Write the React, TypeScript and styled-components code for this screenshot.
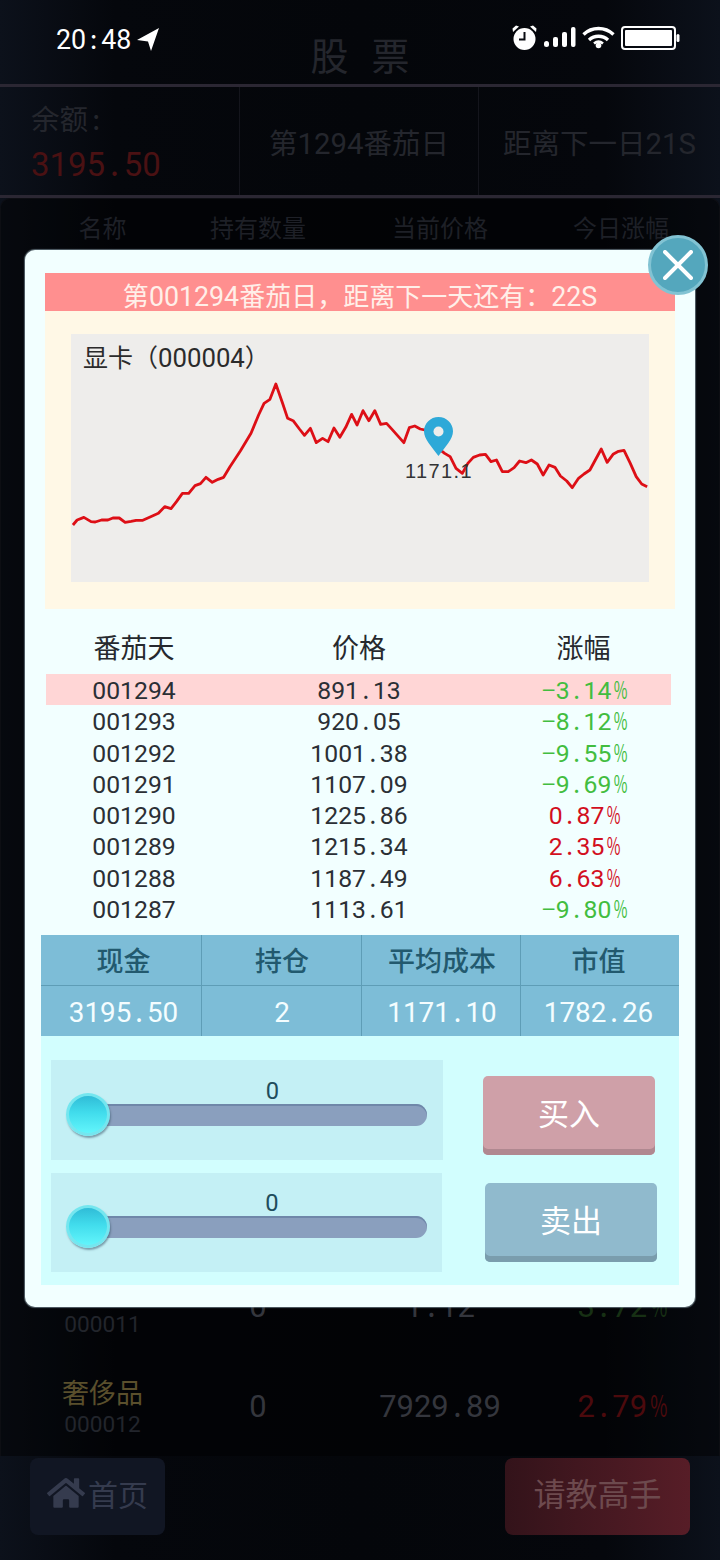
import React from "react";
import styled, { createGlobalStyle } from "styled-components";
import { FaHome } from "react-icons/fa";

const Global = createGlobalStyle`
  html, body { margin: 0; padding: 0; background: #05070c; }
  * { box-sizing: border-box; }
  #root { width: 720px; height: 1560px; overflow: hidden; }
`;

const Page = styled.div`
  position: relative;
  width: 720px;
  height: 1560px;
  display: flex;
  flex-direction: column;
  overflow: hidden;
  font-family: "Noto Sans CJK SC", "Noto Sans", sans-serif;
  background: linear-gradient(90deg, #0c111b 0%, #05070c 16%, #04060a 50%, #05070c 84%, #0c111b 100%);
`;

/* ---------- digits, dots and signs keep the same pitch, as in the reference ---------- */
const Slot = styled.span<{ $squeeze?: boolean }>`
  display: inline-block;
  width: 0.58em;
  text-align: center;
  transform: ${(p) => (p.$squeeze ? "scaleX(0.62)" : "none")};
  transform-origin: center;
`;
const Digits = styled.span`
  font-family: Roboto, "Noto Sans CJK SC", sans-serif;
  font-size: 1.03em;
  font-weight: 400;
`;
const Mono = ({ text }: { text: string }) => (
  <span>
    {text.split(/([.:%-])/).map((part, i) =>
      /^[.:%-]$/.test(part) ? (
        <Slot key={i} $squeeze={part === "%"}>
          {part === "-" ? "−" : part}
        </Slot>
      ) : part ? (
        <Digits key={i}>{part}</Digits>
      ) : null
    )}
  </span>
);

/* ---------- status bar ---------- */
const StatusBar = styled.div`
  position: absolute;
  left: 0;
  top: 0;
  width: 100%;
  height: 50px;
  display: flex;
  justify-content: space-between;
  align-items: flex-start;
  padding: 22px 40px 0 56px;
  color: #fff;
`;
const Clock = styled.div`
  display: flex;
  align-items: center;
  gap: 5px;
  font-size: 26px;
  line-height: 32px;
`;
const StatusIcons = styled.div`
  display: flex;
  align-items: center;
  gap: 6px;
  padding-top: 2px;
`;

/* ---------- dimmed page ---------- */
const Header = styled.header`
  height: 87px;
  padding-top: 26px;
  display: flex;
  align-items: flex-start;
  justify-content: center;
  border-bottom: 3px solid #2b2733;
`;
const Title = styled.h1`
  margin: 0;
  font-size: 38px;
  line-height: 56px;
  font-weight: 400;
  letter-spacing: 23px;
  padding-left: 23px;
  color: #24262d;
`;
const InfoBar = styled.section`
  height: 111px;
  display: grid;
  grid-template-columns: 240px 239px 1fr;
  border-bottom: 3px solid #2b2733;
`;
const InfoCell = styled.div<{ $divider?: boolean }>`
  display: flex;
  flex-direction: column;
  justify-content: center;
  align-items: center;
  font-size: 28.5px;
  color: #24262d;
  white-space: nowrap;
  border-right: ${(p) => (p.$divider ? "1px solid #14151c" : "none")};
`;
const Balance = styled(InfoCell)`
  align-items: flex-start;
  padding-left: 31px;
  line-height: 44px;
`;
const BalanceValue = styled.div`
  font-size: 32px;
  color: #4a1113;
`;
const Panel = styled.section`
  flex: 1;
  display: flex;
  flex-direction: column;
  background: rgba(0, 0, 0, 0.45);
  border-radius: 10px 10px 0 0;
  border: 1px solid #0d0e13;
  border-bottom: none;
`;
const ColumnGrid = styled.div`
  display: grid;
  grid-template-columns: 143px 168px 196px 166px;
  padding-left: 30px;
  align-items: center;
  text-align: center;
`;
const ColumnHead = styled(ColumnGrid)`
  height: 54px;
  font-size: 24px;
  color: #1e2027;
`;
const StockList = styled.div`
  flex: 1;
  display: flex;
  flex-direction: column;
  justify-content: flex-end;
`;
const StockRow = styled(ColumnGrid)`
  height: 100px;
  font-size: 30px;
  color: #34363d;
  white-space: nowrap;
`;
const StockName = styled.div`
  margin-top: 2px;
  font-size: 27px;
  line-height: 32px;
  color: #5a4f2c;
  min-height: 32px;
`;
const StockCode = styled.div`
  font-size: 22px;
  line-height: 28px;
  color: #22252c;
`;
const StockNumber = styled.div`
  padding-bottom: 4px;
`;
const Change = styled(StockNumber)<{ $up?: boolean }>`
  color: ${(p) => (p.$up ? "#4c0a0d" : "#173014")};
`;
const Footer = styled.footer`
  height: 104px;
  padding: 2px 30px 0;
  display: flex;
  justify-content: space-between;
  align-items: flex-start;
`;
const HomeButton = styled.div`
  width: 135px;
  height: 77px;
  display: flex;
  align-items: center;
  justify-content: center;
  gap: 3px;
  padding-bottom: 8px;
  background: #111623;
  border-radius: 8px;
  color: #353b4e;
  font-size: 30px;
`;
const AskButton = styled.div`
  width: 185px;
  height: 77px;
  display: flex;
  align-items: center;
  justify-content: center;
  padding-bottom: 9px;
  background: linear-gradient(90deg, #33131a, #571d27);
  border-radius: 8px;
  color: #6d4a4e;
  font-size: 32px;
`;

/* ---------- modal ---------- */
const Modal = styled.div`
  position: absolute;
  left: 25px;
  top: 250px;
  width: 670px;
  height: 1057px;
  padding: 23px 16px 22px;
  display: flex;
  flex-direction: column;
  background: #f2ffff;
  border-radius: 10px;
  box-shadow: 0 0 1px 1px rgba(140, 160, 170, 0.6);
`;
const CloseButton = styled.div`
  position: absolute;
  left: 623px;
  top: -15px;
  width: 60px;
  height: 60px;
  border-radius: 50%;
  background: #54a7bd;
  border: 3px solid #82c3d3;
  display: flex;
  align-items: center;
  justify-content: center;
`;
const Banner = styled.div`
  height: 38px;
  margin: 0 4px;
  padding-top: 3px;
  background: #ff8f8f;
  color: #ffefe9;
  font-size: 26px;
  line-height: 38px;
  text-align: center;
  white-space: nowrap;
`;
const ChartFrame = styled.div`
  height: 298px;
  margin: 0 4px;
  padding: 23px 26px 27px;
  background: #fff8e6;
`;
const Chart = styled.div`
  position: relative;
  height: 248px;
  background: #eeedeb;
`;
const ChartTitle = styled.div`
  position: absolute;
  left: 12px;
  top: 4px;
  font-size: 25px;
  line-height: 37px;
  color: #2b2b2b;
  white-space: nowrap;
`;
const ChartLine = styled.svg`
  display: block;
  width: 100%;
  height: 100%;
`;
const Pin = styled.svg`
  position: absolute;
  left: 353px;
  top: 83px;
`;
const PinLabel = styled.div`
  position: absolute;
  left: 334px;
  top: 124px;
  font-family: "Liberation Sans", Arial, sans-serif;
  font-size: 20px;
  line-height: 26px;
  letter-spacing: 1.4px;
  color: #333;
  white-space: nowrap;
`;
const HistoryGrid = styled.div`
  display: grid;
  grid-template-columns: 176px 1fr 175px;
  text-align: center;
`;
const HistoryHead = styled(HistoryGrid)`
  height: 65px;
  margin: 0 8px 0 5px;
  font-size: 27px;
  line-height: 76px;
  color: #26292e;
`;
const HistoryRow = styled(HistoryGrid)<{ $active?: boolean }>`
  height: 31.3px;
  margin: 0 8px 0 5px;
  font-size: 24px;
  line-height: 29px;
  color: #2b2f35;
  background: ${(p) => (p.$active ? "#ffd6d6" : "transparent")};
`;
const Percent = styled.div<{ $up?: boolean }>`
  color: ${(p) => (p.$up ? "#d20f1e" : "#42bd3f")};
`;
const StatsTable = styled.div`
  margin-top: 11px;
  height: 101px;
  display: grid;
  grid-template-columns: 161px 160px 159px 158px;
  grid-template-rows: 51px 50px;
  background: #7dbdd7;
`;
const StatCell = styled.div<{ $head?: boolean; $last?: boolean; $nudge: number }>`
  display: flex;
  align-items: center;
  justify-content: center;
  padding-left: ${(p) => Math.max(p.$nudge, 0)}px;
  padding-right: ${(p) => Math.max(-p.$nudge, 0)}px;
  padding-bottom: 2px;
  font-size: 27px;
  color: ${(p) => (p.$head ? "#22596e" : "#f4fdff")};
  font-weight: ${(p) => (p.$head ? 500 : 400)};
  border-right: ${(p) => (p.$last ? "none" : "1px solid #5e9db6")};
  border-bottom: ${(p) => (p.$head ? "1px solid #5e9db6" : "none")};
`;
const TradeArea = styled.div`
  flex: 1;
  display: flex;
  padding: 24px 10px 13px;
  background: #d2fefe;
`;
const Sliders = styled.div`
  width: 392px;
  display: flex;
  flex-direction: column;
  gap: 13px;
`;
const SliderBox = styled.div<{ $second?: boolean }>`
  width: ${(p) => (p.$second ? 391 : 392)}px;
  height: ${(p) => (p.$second ? 99 : 100)}px;
  padding: ${(p) => (p.$second ? 15 : 16)}px 0 0 34px;
  background: #c4f0f5;
`;
const SliderValue = styled.div`
  height: 28px;
  padding-left: 17px;
  text-align: center;
  font-size: 23px;
  line-height: 26px;
  color: #1f4d5c;
`;
const Track = styled.div`
  position: relative;
  width: 342px;
  height: 22px;
  border-radius: 0 11px 11px 0;
  background: #8a9fbe;
  box-shadow: inset 0 2px 0 #6f87a9;
`;
const Thumb = styled.div`
  position: absolute;
  left: -19px;
  top: -11px;
  width: 44px;
  height: 43px;
  border-radius: 50%;
  background: linear-gradient(180deg, #30bcd7 0%, #41dcec 45%, #62f5fb 100%);
  border: 3px solid #74e6ef;
  box-shadow: 1px 2px 2px rgba(60, 90, 110, 0.55);
`;
const TradeButtons = styled.div`
  display: flex;
  flex-direction: column;
  gap: 28px;
  padding: 16px 0 0 40px;
`;
const TradeButton = styled.div<{ $face: string; $edge: string; $shift?: number }>`
  width: 172px;
  height: 79px;
  margin-left: ${(p) => p.$shift ?? 0}px;
  display: flex;
  align-items: center;
  justify-content: center;
  padding-bottom: 8px;
  border-radius: 5px;
  color: #fff;
  font-size: 31px;
  background: ${(p) => p.$face};
  box-shadow: inset 0 -6px 0 ${(p) => p.$edge};
`;

/* ---------- data ---------- */
const history = [
  ["001294", "891.13", "-3.14%", false],
  ["001293", "920.05", "-8.12%", false],
  ["001292", "1001.38", "-9.55%", false],
  ["001291", "1107.09", "-9.69%", false],
  ["001290", "1225.86", "0.87%", true],
  ["001289", "1215.34", "2.35%", true],
  ["001288", "1187.49", "6.63%", true],
  ["001287", "1113.61", "-9.80%", false],
] as const;

const stats = [
  { head: "现金", value: "3195.50", nudge: 5 },
  { head: "持仓", value: "2", nudge: 1 },
  { head: "平均成本", value: "1171.10", nudge: 2 },
  { head: "市值", value: "1782.26", nudge: -3 },
];

const linePoints =
  "102,615 112,600 128,592 145,605 155,606 170,600 185,600 197,594 212,594 226,607 240,604 252,601 268,601 284,592 305,580 320,560 335,566 348,545 362,520 377,520 392,497 405,491 418,472 433,487 447,478 460,472 475,440 500,392 525,340 543,285 556,250 570,238 584,192 600,250 612,295 625,302 640,327 652,346 666,325 680,368 695,355 708,365 722,324 736,352 750,322 764,283 777,315 791,272 805,302 819,272 833,313 847,310 860,328 888,368 901,323 914,318 927,327 945,332 960,365 970,385 985,400 998,410 1012,445 1027,460 1040,430 1053,412 1068,405 1082,403 1095,425 1108,420 1122,455 1136,455 1150,443 1163,423 1178,428 1191,420 1205,432 1219,465 1233,435 1247,442 1260,468 1275,483 1288,503 1303,475 1316,462 1330,450 1357,387 1371,427 1385,403 1398,394 1411,391 1426,430 1440,470 1453,492 1466,500";

export default function App() {
  return (
    <Page>
      <Global />
      <Header>
        <Title>股票</Title>
      </Header>
      <InfoBar>
        <Balance $divider>
          <span>
            余额
            <Mono text=":" />
          </span>
          <BalanceValue>
            <Mono text="3195.50" />
          </BalanceValue>
        </Balance>
        <InfoCell $divider>
          <span>
            第<Mono text="1294" />
            番茄日
          </span>
        </InfoCell>
        <InfoCell>
          <span>
            距离下一日
            <Mono text="21S" />
          </span>
        </InfoCell>
      </InfoBar>
      <Panel>
        <ColumnHead>
          <div>名称</div>
          <div>持有数量</div>
          <div>当前价格</div>
          <div>今日涨幅</div>
        </ColumnHead>
        <StockList>
          <StockRow>
            <div>
              <StockName />
              <StockCode>
                <Mono text="000011" />
              </StockCode>
            </div>
            <StockNumber>
              <Mono text="0" />
            </StockNumber>
            <StockNumber>
              <Mono text="1.12" />
            </StockNumber>
            <Change>
              <Mono text="3.72%" />
            </Change>
          </StockRow>
          <StockRow>
            <div>
              <StockName>奢侈品</StockName>
              <StockCode>
                <Mono text="000012" />
              </StockCode>
            </div>
            <StockNumber>
              <Mono text="0" />
            </StockNumber>
            <StockNumber>
              <Mono text="7929.89" />
            </StockNumber>
            <Change $up>
              <Mono text="2.79%" />
            </Change>
          </StockRow>
        </StockList>
      </Panel>
      <Footer>
        <HomeButton>
          <FaHome size={38} />
          首页
        </HomeButton>
        <AskButton>请教高手</AskButton>
      </Footer>

      <StatusBar>
        <Clock>
          <Mono text="20:48" />
          <svg width="24" height="24" viewBox="0 0 24 24" fill="#fff">
            <path d="M23 1 1 13l11 1.5L15 24z" />
          </svg>
        </Clock>
        <StatusIcons>
          <svg width="27" height="27" viewBox="0 0 27 27">
            <circle cx="13.5" cy="15" r="11" fill="#fff" />
            <path d="M2 8 8 2.5 5 1.5 1.5 4.5zM25 8 19 2.5 22 1.5 25.5 4.5z" fill="#fff" />
            <path d="M13.5 8v7.5H8" fill="none" stroke="#0a0c12" strokeWidth="2" />
          </svg>
          <svg width="32" height="21" viewBox="0 0 32 21" fill="#fff">
            <rect x="0" y="14" width="5" height="6" rx="2.5" />
            <rect x="9" y="10" width="5" height="10" rx="2" />
            <rect x="18" y="5" width="5" height="15" rx="2" />
            <rect x="27" y="0" width="4.5" height="20" rx="2" />
          </svg>
          <svg width="33" height="23" viewBox="0 0 33 23" fill="none" stroke="#fff" strokeWidth="3.4">
            <path d="M1.5 8.5c8.5-8 21.5-8 30 0" />
            <path d="M7 14c5.5-5 13.5-5 19 0" />
            <circle cx="16.5" cy="19.5" r="2.8" fill="#fff" stroke="none" />
            <path d="M12 17.5c3-2.5 6-2.5 9 0" strokeWidth="2.5" />
          </svg>
          <svg width="59" height="24" viewBox="0 0 59 24">
            <rect x="1" y="1" width="53" height="22" rx="3" fill="none" stroke="#fff" strokeWidth="2" />
            <rect x="4" y="4" width="47" height="16" rx="1" fill="#fff" />
            <rect x="55.5" y="8" width="3" height="8" rx="1.5" fill="#fff" />
          </svg>
        </StatusIcons>
      </StatusBar>

      <Modal>
        <CloseButton>
          <svg width="30" height="30" viewBox="0 0 30 30" stroke="#fff" strokeWidth="4" strokeLinecap="round">
            <path d="M2 2l26 26M28 2 2 28" />
          </svg>
        </CloseButton>
        <Banner>
          第<Mono text="001294" />
          番茄日，距离下一天还有：
          <Mono text="22S" />
        </Banner>
        <ChartFrame>
          <Chart>
            <ChartLine viewBox="97.4 42 1373 744" preserveAspectRatio="none">
              <polyline
                points={linePoints}
                fill="none"
                stroke="#dd0f16"
                strokeWidth="2.8"
                strokeLinejoin="round"
                vectorEffect="non-scaling-stroke"
              />
            </ChartLine>
            <ChartTitle>
              显卡（
              <Mono text="000004" />）
            </ChartTitle>
            <Pin width="29" height="39" viewBox="0 0 29 39">
              <path
                d="M14.5 0C6.5 0 0 6.3 0 14.2 0 22 8 30 14.5 39 21 30 29 22 29 14.2 29 6.3 22.5 0 14.5 0z"
                fill="#2ea9d8"
              />
              <circle cx="14.5" cy="14.5" r="5" fill="#eeedeb" />
            </Pin>
            <PinLabel>1171.1</PinLabel>
          </Chart>
        </ChartFrame>
        <HistoryHead>
          <div>番茄天</div>
          <div>价格</div>
          <div>涨幅</div>
        </HistoryHead>
        {history.map(([day, price, pct, up], i) => (
          <HistoryRow key={day} $active={i === 0}>
            <div>
              <Mono text={day} />
            </div>
            <div>
              <Mono text={price} />
            </div>
            <Percent $up={up}>
              <Mono text={pct} />
            </Percent>
          </HistoryRow>
        ))}
        <StatsTable>
          {stats.map((s, i) => (
            <StatCell key={s.head} $head $last={i === 3} $nudge={s.nudge}>
              {s.head}
            </StatCell>
          ))}
          {stats.map((s, i) => (
            <StatCell key={s.head} $last={i === 3} $nudge={s.nudge}>
              <Mono text={s.value} />
            </StatCell>
          ))}
        </StatsTable>
        <TradeArea>
          <Sliders>
            <SliderBox>
              <SliderValue>
                <Mono text="0" />
              </SliderValue>
              <Track>
                <Thumb />
              </Track>
            </SliderBox>
            <SliderBox $second>
              <SliderValue>
                <Mono text="0" />
              </SliderValue>
              <Track>
                <Thumb />
              </Track>
            </SliderBox>
          </Sliders>
          <TradeButtons>
            <TradeButton $face="#cfa0a8" $edge="#b08890">
              买入
            </TradeButton>
            <TradeButton $face="#90bacd" $edge="#7a9dad" $shift={2}>
              卖出
            </TradeButton>
          </TradeButtons>
        </TradeArea>
      </Modal>
    </Page>
  );
}
